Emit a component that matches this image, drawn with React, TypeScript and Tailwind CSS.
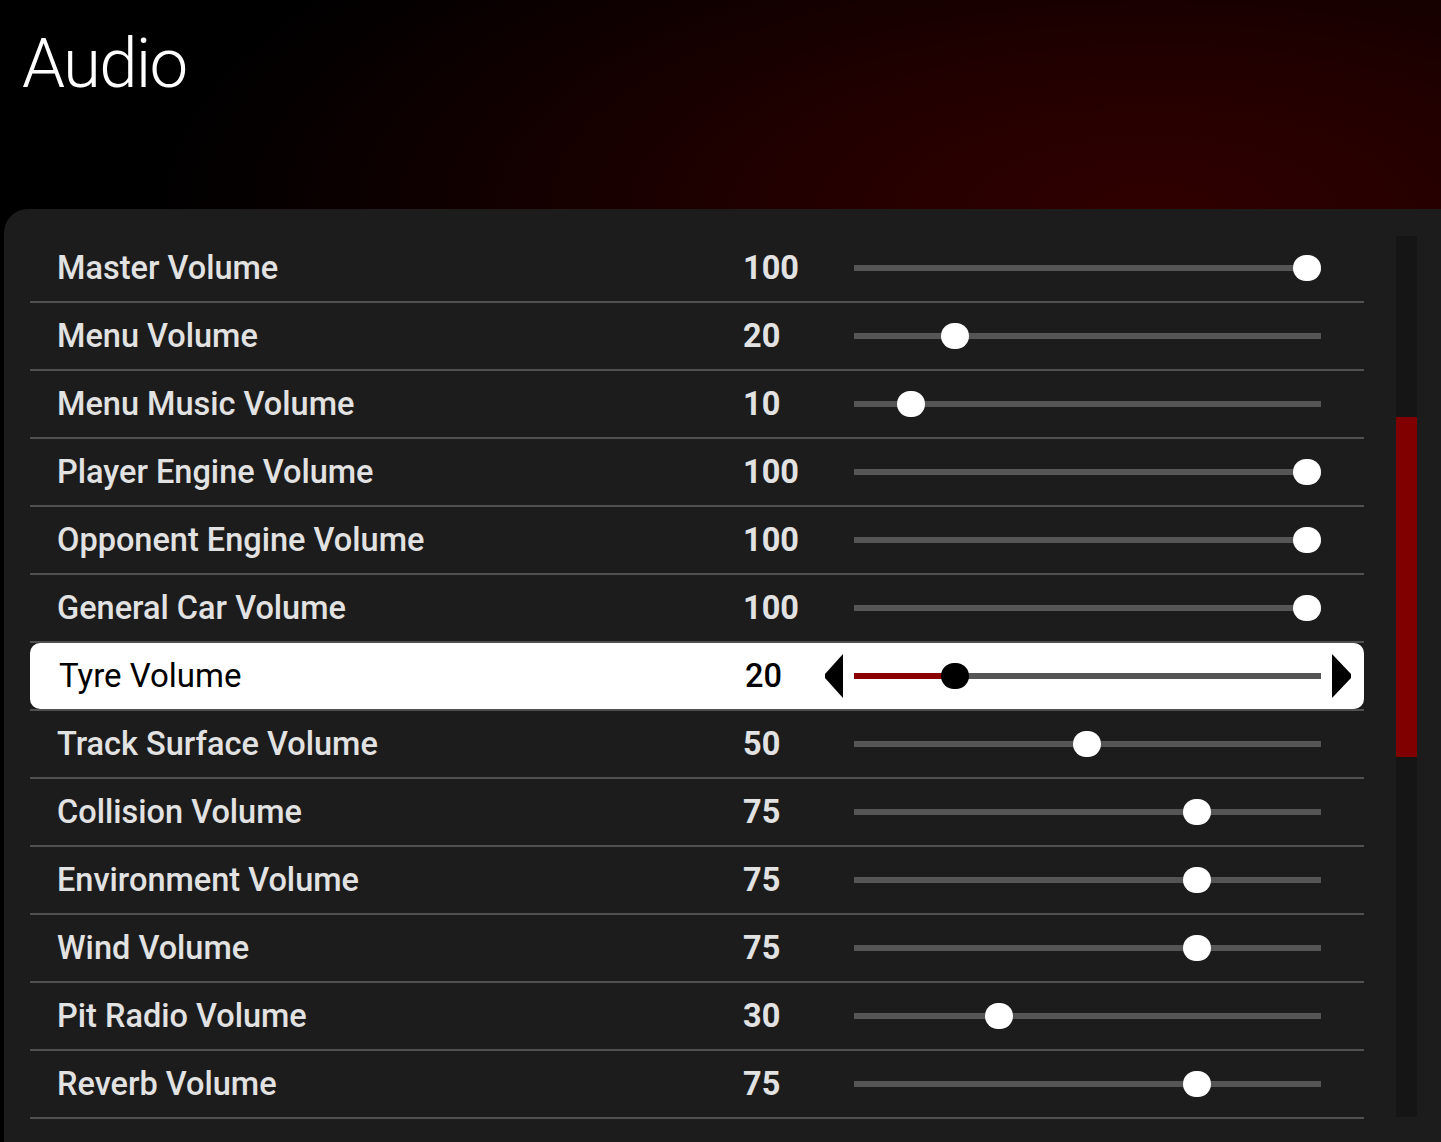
import React from "react";

type Setting = { label: string; value: number };

const settings: Setting[] = [
  { label: "Master Volume", value: 100 },
  { label: "Menu Volume", value: 20 },
  { label: "Menu Music Volume", value: 10 },
  { label: "Player Engine Volume", value: 100 },
  { label: "Opponent Engine Volume", value: 100 },
  { label: "General Car Volume", value: 100 },
  { label: "Tyre Volume", value: 20 },
  { label: "Track Surface Volume", value: 50 },
  { label: "Collision Volume", value: 75 },
  { label: "Environment Volume", value: 75 },
  { label: "Wind Volume", value: 75 },
  { label: "Pit Radio Volume", value: 30 },
  { label: "Reverb Volume", value: 75 },
];

const SELECTED = 6;

// thumb travels from 13px to 453px along a 467px track
const thumbLeft = (v: number) => 13 + 4.4 * v - 14;

const Slider = ({ value, active }: { value: number; active: boolean }) => {
  return (
    <div className="flex items-center h-full shrink-0">
      <div className="w-[30px] flex items-center">
        {active && (
          <svg width="19" height="44" viewBox="0 0 19 44">
            <polygon points="19,0 1,20 1,24 19,44" fill="#000" />
          </svg>
        )}
      </div>
      <div className="relative w-[467px] h-[6px] bg-[#555555]">
        {active && (
          <div
            className="absolute left-0 top-0 h-full bg-[#8b0000]"
            style={{ width: 13 + 4.4 * value }}
          />
        )}
        <div
          className={`absolute top-1/2 -translate-y-1/2 w-[28px] h-[26px] rounded-full ${
            active ? "bg-black" : "bg-white"
          }`}
          style={{ left: thumbLeft(value) }}
        />
      </div>
      <div className="ml-[11px] w-[20px] flex items-center">
        {active && (
          <svg width="20" height="44" viewBox="0 0 20 44">
            <polygon points="0,0 19,20 19,24 0,44" fill="#000" />
          </svg>
        )}
      </div>
    </div>
  );
};

const Row = ({ item, active }: { item: Setting; active: boolean }) => {
  return (
    <div className="border-b-2 border-[#505050]">
      <div
        className={`flex items-center h-[66px] ${
          active ? "bg-white rounded-[10px] text-black" : "text-[#e2e2e2]"
        }`}
      >
        <div
          className={`w-[713px] shrink-0 ${
            active
              ? "font-normal pl-[29px] text-[33px]"
              : "font-medium pl-[27px] text-[32.5px]"
          }`}
        >
          {item.label}
        </div>
        <div
          className={`w-[81px] shrink-0 text-[32.5px] ${
            active ? "font-medium pl-[2px]" : "font-bold"
          }`}
        >
          {item.value}
        </div>
        <Slider value={item.value} active={active} />
      </div>
    </div>
  );
};

export default function App() {
  return (
    <div
      className="w-[1441px] h-[1142px] overflow-hidden bg-black flex flex-col"
      style={{ fontFamily: "Roboto, 'Liberation Sans', sans-serif" }}
    >
      <header className="h-[209px] shrink-0 bg-[radial-gradient(ellipse_70%_190%_at_80%_100%,#300000_0%,#230000_35%,#140000_62%,#000000_100%)]">
        <h1 className="pl-[22px] pt-[29px] text-[69px] font-light text-white leading-none tracking-tight">
          Audio
        </h1>
      </header>
      <div className="flex-1 ml-[4px] rounded-tl-[24px] bg-[#1c1c1c] pt-[26px] flex items-start">
        <div className="ml-[26px] w-[1334px]">
          {settings.map((s, i) => (
            <Row key={s.label} item={s} active={i === SELECTED} />
          ))}
        </div>
        <div className="ml-[32px] mt-[1px] w-[21px] h-[881px] bg-[#151515]">
          <div className="mt-[181px] h-[340px] bg-[#800000]" />
        </div>
      </div>
    </div>
  );
}
